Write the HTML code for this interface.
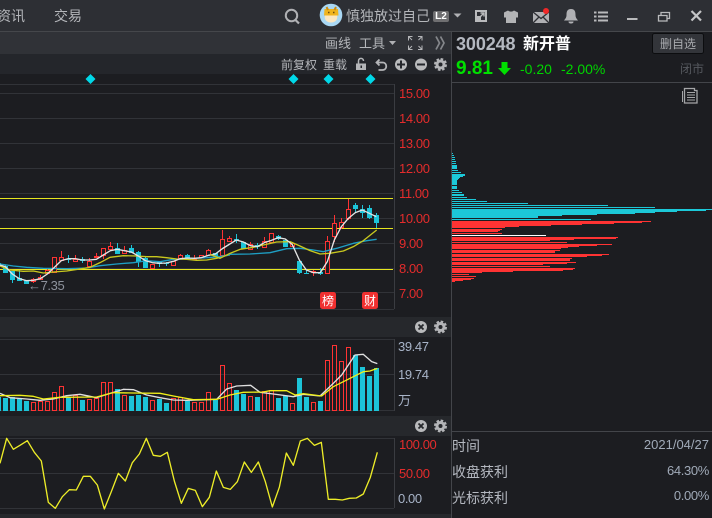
<!DOCTYPE html>
<html><head><meta charset="utf-8"><style>
*{margin:0;padding:0;box-sizing:border-box}
html,body{width:712px;height:518px;overflow:hidden;background:#1c1d21}
body{position:relative;font-family:"Liberation Sans","Noto Sans CJK SC",sans-serif}
.a{position:absolute}
.t{position:absolute;white-space:nowrap;line-height:16px}
.n{letter-spacing:-.4px}
svg{position:absolute;left:0;top:0}
</style></head><body>
<div class="a" style="left:0;top:0;width:712px;height:31px;background:#2d2f34"></div>
<div class="a" style="left:0;top:31px;width:712px;height:1px;background:#45474b"></div>
<div class="a" style="left:0;top:32px;width:451px;height:22px;background:#303237"></div>
<div class="a" style="left:0;top:54px;width:451px;height:20px;background:#24262b"></div>
<div class="a" style="left:0;top:317px;width:451px;height:20px;background:#26282c"></div>
<div class="a" style="left:0;top:416px;width:451px;height:20px;background:#26282c"></div>
<div class="a" style="left:0;top:514px;width:451px;height:4px;background:#26282c"></div>

<svg width="712" height="518" viewBox="0 0 712 518">
<path d="M451.5 32V518M452 82.500H712M452 431.500H712" stroke="#43454a" fill="none"/>
<path d="M0 84.500H394M0 93.500H394M0 118.500H394M0 143.500H394M0 168.500H394M0 193.500H394M0 218.500H394M0 243.500H394M0 268.500H394M0 292.500H394M0 309.500H394M0 339.500H394M0 374.500H394M0 410.500H394M0 438.500H394M0 473.500H394M0 508.500H394" stroke="#313338" fill="none"/>
<path d="M394.500 84V309M394.500 339V411M394.500 438V508" stroke="#3a3c41" fill="none"/>
<path d="M0 198.500H393" stroke="#e6e61e" fill="none"/>
<path d="M0 228.500H393" stroke="#e6e61e" fill="none"/>
<rect x="0" y="269" width="393" height="1" fill="#e6e61e"/>
<path fill="#00d8e8" d="M90.500 74l5 5-5 5-5-5zM293.500 74l5 5-5 5-5-5zM328.500 74l5 5-5 5-5-5zM370.500 74l5 5-5 5-5-5z"/>

<!-- candle wicks and bodies -->
<path stroke="#1cc4d8" fill="none" d="M5.500 265V267M12.500 280V283M19.500 270V278M68.500 255V263M82.500 257V263M117.500 243V248M131.500 245V248M138.500 251V252M138.500 262V267M145.500 257V258M159.500 261V267M166.500 262V266M187.500 254V255M236.500 234V243M257.500 243V249M278.500 235V240M285.500 239V240M299.500 260V274M306.500 269V274M320.500 268V275M355.500 203V213M362.500 205V218M369.500 205V219M376.500 213V228"/>
<path fill="#1cc4d8" d="M-4 263h5v3h-5zM3 266h5v7H3zM10 271h5v9h-5zM17 278h5v3h-5zM24 280h5v4h-5zM66 259h5v1h-5zM80 259h5v2h-5zM115 248h5v6h-5zM129 248h5v5h-5zM136 252h5v10h-5zM143 258h5v10h-5zM157 262h5v2h-5zM164 263h5v1h-5zM185 255h5v4h-5zM213 253h5v3h-5zM234 239h5v2h-5zM241 242h5v7h-5zM255 245h5v2h-5zM276 236h5v3h-5zM283 240h5v7h-5zM297 261h5v12h-5zM304 273h5v1h-5zM318 272h5v2h-5zM353 205h5v4h-5zM360 209h5v4h-5zM367 208h5v10h-5zM374 215h5v8h-5z"/>
<path stroke="#ff3333" fill="none" d="M33.500 278V283M40.500 275V280M47.500 268V274M61.500 251V257M75.500 255V259M89.500 258V261M96.500 253V258M103.500 255V259M110.500 242V251M124.500 246V250M152.500 268V269M180.500 254V255M194.500 255V258M208.500 249V250M222.500 230V239M229.500 236V242M250.500 242V250M264.500 237V241M292.500 242V247M313.500 270V276M327.500 236V241M334.500 215V242M341.500 218V229M348.500 199V220"/>
<path stroke="#ff3333" fill="#1c1d21" d="M31.500 279.500h4v2h-4zM38.500 277.500h4v2h-4zM45.500 270.500h4v3h-4zM52.500 257.500h4v15h-4zM59.500 257.500h4v3h-4zM73.500 259.500h4v2h-4zM87.500 261.500h4v5h-4zM94.500 256.500h4v1h-4zM101.500 248.500h4v7h-4zM108.500 246.500h4v3h-4zM122.500 250.500h4v3h-4zM150.500 264.500h4v4h-4zM171.500 261.500h4v4h-4zM178.500 255.500h4v3h-4zM192.500 258.500h4v1h-4zM199.500 255.500h4v2h-4zM206.500 250.500h4v5h-4zM220.500 239.500h4v16h-4zM227.500 238.500h4v3h-4zM248.500 244.500h4v5h-4zM262.500 241.500h4v6h-4zM269.500 233.500h4v9h-4zM290.500 243.500h4v3h-4zM311.500 271.500h4v1h-4zM325.500 241.500h4v32h-4zM332.500 223.500h4v13h-4zM339.500 222.500h4v5h-4zM346.500 209.500h4v9h-4z"/>

<!-- MA lines on price chart -->
<g transform="translate(0,190) scale(.33333)" fill="none" stroke-linejoin="round" stroke-width="4">
<path stroke="#1e9fc4" d="M0 222L40 228 80 232 130 235 200 236 260 234 300 227 350 222 400 218 440 212 480 215 520 208 560 206 620 203 660 200 690 195"/>
<path stroke="#c9c91e" d="M0 228L30 240 70 244 100 243 130 249 160 246 200 243 240 237 270 232 300 218 330 202 370 197 410 198 440 200 470 200 500 203 530 207 560 208 590 211 620 210 650 205 690 193"/>
<path stroke="#e4e4e4" d="M0 225L16 230 37 252 58 266 79 272 100 271 121 266 142 252 163 232 184 212 205 206 226 206 247 210 268 210 289 208 310 195 331 182 352 178 373 182 394 186 415 198 436 212 457 218 478 220 499 219 520 214 541 206 562 204 583 205 604 203 625 196 646 192 667 176 688 163"/>
</g>
<g transform="translate(220,190) scale(.33333)" fill="none" stroke-linejoin="round" stroke-width="4">
<path stroke="#1e9fc4" d="M-30 195L0 200 30 193 90 192 150 188 200 176 240 175 280 180 310 185 350 175 400 160 440 152 470 148"/>
<path stroke="#c9c91e" d="M-30 193L0 205 30 190 60 178 100 172 130 165 170 156 210 155 240 168 270 182 300 192 330 190 370 183 400 170 430 152 470 120"/>
<path stroke="#e4e4e4" d="M7 176L28 163 49 150 70 156 91 167 112 170 133 158 154 151 175 143 196 147 217 164 238 210 259 240 280 248 301 248 322 215 343 150 364 110 385 85 406 68 427 60 448 70 469 80"/>
</g>

<!-- volume -->
<path fill="#1cc4d8" d="M-4 397h5v14h-5zM3 398h5v13H3zM10 397h5v14h-5zM17 399h5v12h-5zM24 401h5v10h-5zM66 397h5v14h-5zM80 400h5v11h-5zM115 389h5v22h-5zM129 396h5v15h-5zM136 395h5v16h-5zM143 397h5v14h-5zM157 399h5v12h-5zM164 403h5v8h-5zM185 401h5v10h-5zM213 400h5v11h-5zM234 390h5v21h-5zM241 394h5v17h-5zM255 397h5v14h-5zM276 398h5v13h-5zM283 396h5v15h-5zM297 378h5v33h-5zM304 397h5v14h-5zM318 401h5v10h-5zM353 355h5v56h-5zM360 367h5v44h-5zM367 376h5v35h-5zM374 368h5v43h-5z"/>
<path stroke="#ff3333" fill="none" d="M31.500 402.500h4v8h-4zM38.500 401.500h4v9h-4zM45.500 401.500h4v9h-4zM52.500 392.500h4v18h-4zM59.500 386.500h4v24h-4zM73.500 395.500h4v15h-4zM87.500 399.500h4v11h-4zM94.500 398.500h4v12h-4zM101.500 382.500h4v28h-4zM108.500 382.500h4v28h-4zM122.500 395.500h4v15h-4zM150.500 400.500h4v10h-4zM171.500 398.500h4v12h-4zM178.500 397.500h4v13h-4zM192.500 402.500h4v8h-4zM199.500 402.500h4v8h-4zM206.500 392.500h4v18h-4zM220.500 365.500h4v45h-4zM227.500 383.500h4v27h-4zM248.500 396.500h4v14h-4zM262.500 391.500h4v19h-4zM269.500 390.500h4v20h-4zM290.500 403.500h4v7h-4zM311.500 402.500h4v8h-4zM325.500 360.500h4v50h-4zM332.500 345.500h4v65h-4zM339.500 361.500h4v49h-4zM346.500 347.500h4v63h-4z"/>
<g transform="translate(0,315) scale(.33333)" fill="none" stroke-linejoin="round" stroke-width="4">
<path stroke="#e0e0e0" d="M0 235L30 248 80 252 120 256 160 252 200 242 240 238 290 248 330 235 370 223 400 224 440 240 480 248 520 255 560 256 600 255 650 253 680 222 710 213 752 211 780 232 820 237 880 245 910 238 960 243 1000 205 1025 180 1065 120 1090 118 1115 140 1132 146"/>
<path stroke="#f0f01a" d="M0 242L60 241 100 244 130 252 180 247 290 246 340 233 400 234 480 235 520 243 580 254 650 253 690 240 730 232 790 231 810 227 860 227 885 240 910 236 965 243 1000 215 1030 200 1090 170 1110 168 1132 160"/>
<!-- stochastic -->
<path stroke="#eded28" d="M0 445L20 370 40 403 60 391 82 377 103 412 124 438 145 562 166 580 187 545 208 524 229 525 250 484 271 484 292 510 313 582 334 530 355 475 376 498 397 443 418 417 439 370 460 421 481 424 502 412 523 498 544 565 565 520 586 526 607 575 628 547 649 468 670 517 691 523 712 500 733 441 754 472 775 441 796 500 817 576 838 517 859 414 880 451 901 378 922 370 943 391 964 382 985 553 1006 553 1027 555 1048 550 1069 549 1090 537 1111 487 1132 412"/>
</g>

<!-- volume profile -->
<g transform="translate(445,145) scale(.33333)">
<path fill="#1cc8d8" d="M21 24H24V27H21ZM21 30H27V33H21ZM21 36H30V39H21ZM21 42H30V45H21ZM21 48H33V51H21ZM21 54H33V57H21ZM21 60H36V72H21ZM21 75H39V78H21ZM21 81H48V84H21ZM21 87H60V93H21ZM21 93H54V96H21ZM21 96H45V99H21ZM21 99H42V102H21ZM21 102H39V105H21ZM21 105H36V120H21ZM21 123H36V132H21ZM21 135H42V138H21ZM21 141H51V144H21ZM21 147H57V153H21ZM21 156H66V159H21ZM21 162H93V165H21ZM21 168H126V171H21ZM21 174H249V177H21ZM21 180H489V183H21ZM21 186H630V189H21ZM21 192H801V195H21ZM21 195H783V198H21ZM21 198H696V201H21ZM21 201H630V204H21ZM21 204H570V207H21ZM21 207H456V210H21ZM21 210H351V213H21ZM21 213H279V219H21ZM21 222H438V225H21Z"/>
<path fill="#ff3333" d="M21 228H618V231H21ZM21 231H591V234H21ZM21 234H507V237H21ZM21 237H411V240H21ZM21 240H318V243H21ZM21 243H222V246H21ZM21 246H180V249H21ZM21 252H171V255H21ZM21 255H165V258H21ZM21 258H159V261H21ZM21 264H171V267H21ZM21 276H519V279H21ZM21 279H513V282H21ZM21 282H387V285H21ZM21 285H315V288H21ZM21 291H366V294H21ZM21 297H501V300H21ZM21 300H456V303H21ZM21 303H402V306H21ZM21 306H369V309H21ZM21 309H348V312H21ZM21 315H345V318H21ZM21 318H330V324H21ZM21 327H492V330H21ZM21 330H471V333H21ZM21 333H426V336H21ZM21 339H381V342H21ZM21 342H375V348H21ZM21 351H393V354H21ZM21 354H366V357H21ZM21 357H294V360H21ZM21 363H315V366H21ZM21 369H390V372H21ZM21 372H384V375H21ZM21 375H354V378H21ZM21 378H204V381H21ZM21 381H111V384H21ZM21 387H72V390H21ZM21 393H93V396H21ZM21 399H87V402H21ZM21 402H78V405H21ZM21 405H54V408H21ZM21 408H30V411H21Z"/>
<path fill="#fff" d="M21 270H303V273H21Z"/>
</g>

<!-- header icons -->
<circle cx="291.500" cy="15.500" r="5.700" fill="none" stroke="#b0b1b4" stroke-width="2"/><path d="M295.500 20l3.500 3.500" stroke="#b0b1b4" stroke-width="2.200"/>
<circle cx="331" cy="15" r="11.300" fill="#a9d8f4"/>
<path d="M325 15c-1 4 1 7.500 6 7.500s7-3.500 6-7.500z" fill="#fbe6c0"/>
<path d="M324.500 9h13.500l.5 6.500h-14.500z" fill="#f0b41e"/>
<path d="M326.500 7l1.500 3M336 7l-1.500 3" stroke="#c98c14" stroke-width="2"/>
<path d="M328 12.500h1.500M333 12.500h1.500" stroke="#6b4a10" stroke-width="1.500"/>
<rect x="433" y="11" width="16" height="11" rx="2" fill="#6f6f71"/>
<path d="M453.500 13.500h8l-4 4z" fill="#b0b1b4"/>
<path d="M476 16v-5h10v10h-5" fill="none" stroke="#b9babc" stroke-width="2"/><path d="M475 16h6v6h-6z" fill="#b9babc"/><path d="M479 18l5-5M480.500 13h3.500v3.500" fill="none" stroke="#b9babc" stroke-width="1.400"/>
<path d="M508 10.500c2 1.500 4 1.500 6 0l4 2v5h-2v5.500h-10v-5.500h-2v-5z" fill="#b3b4b6"/>
<path d="M533 12h16v11h-16z" fill="#b0b1b4"/><path d="M533 12l8 6.500 8-6.500M533 23l6-6M549 23l-6-6" fill="none" stroke="#2d2f34" stroke-width="1.300"/>
<circle cx="546" cy="11" r="3" fill="#f02828"/>
<path d="M571 9c4 0 4.500 3 4.500 6 0 2.500 1 3.500 2.500 5.500h-14c1.500-2 2.500-3 2.500-5.500 0-3 .5-6 4.500-6z" fill="#b0b1b4"/><path d="M568.500 21.500h5c0 1.500-1 2-2.500 2s-2.500-.5-2.500-2z" fill="#b0b1b4"/>
<path d="M594 12.500h2.500M598 12.500h10M594 16.500h2.500M598 16.500h10M594 20.500h2.500M598 20.500h10" stroke="#b9babc" stroke-width="2"/>
<path d="M627 19h10.500" stroke="#b9babc" stroke-width="2"/>
<path d="M658.500 15.500h8.500v5.500h-8.500zM661 15v-2.500h8.500v6h-2.500" fill="none" stroke="#b9babc" stroke-width="1.300"/>
<path d="M691.500 11l9.500 9.500M701 11l-9.500 9.500" stroke="#c4c5c7" stroke-width="2.200"/>

<!-- toolbar icons -->
<path d="M389 41h7l-3.500 4z" fill="#b0b1b4"/>
<path d="M408.500 40.500v-4h4M422 40.500v-4h-4M408.500 45.500v4h4M422 45.500v4h-4M409 37l3 3M421.500 37l-3 3M409 49l3-3M421.500 49l-3-3" fill="none" stroke="#b4b5b8"/>
<path d="M436 36.500l3.500 6.500-3.500 6.500M440.500 36.500l3.500 6.500-3.500 6.500" fill="none" stroke="#85878b" stroke-width="1.700"/>
<path d="M356 63.500h10v6.500h-10z" fill="#b4b5b8"/><path d="M358.500 63.500v-2.500c0-3.500 5-3.500 5 0" fill="none" stroke="#b4b5b8" stroke-width="1.500"/><rect x="360.500" y="65.500" width="1.500" height="2.500" fill="#24262b"/>
<path d="M379.500 59.500l-3 3 3 3M376.500 62.500h6c5 0 5 7.500 0 7.500h-4" fill="none" stroke="#b4b5b8" stroke-width="1.800"/>
<circle cx="401" cy="64.500" r="6" fill="#b9babc"/><path d="M397 64.500h8M401 60.500v8" stroke="#24262b" stroke-width="2"/>
<circle cx="421" cy="64.500" r="6" fill="#b9babc"/><path d="M417 64.500h8" stroke="#24262b" stroke-width="2"/>
<circle cx="440.500" cy="64.500" r="3.500" fill="none" stroke="#b4b5b8" stroke-width="3"/><circle cx="440.500" cy="64.500" r="5.300" fill="none" stroke="#b4b5b8" stroke-width="2.400" stroke-dasharray="2.500 1.660"/>

<circle cx="421" cy="327" r="6" fill="#b9babc"/><path d="M418.500 324.500l5 5M423.500 324.500l-5 5" stroke="#26282c" stroke-width="1.800"/>
<circle cx="440.500" cy="327" r="3.500" fill="none" stroke="#b4b5b8" stroke-width="3"/><circle cx="440.500" cy="327" r="5.300" fill="none" stroke="#b4b5b8" stroke-width="2.400" stroke-dasharray="2.500 1.660"/>
<circle cx="421" cy="426" r="6" fill="#b9babc"/><path d="M418.500 423.500l5 5M423.500 423.500l-5 5" stroke="#26282c" stroke-width="1.800"/>
<circle cx="440.500" cy="426" r="3.500" fill="none" stroke="#b4b5b8" stroke-width="3"/><circle cx="440.500" cy="426" r="5.300" fill="none" stroke="#b4b5b8" stroke-width="2.400" stroke-dasharray="2.500 1.660"/>

<!-- quote -->
<path d="M501.500 62h6v6h3.500l-6.500 7-6.500-7h3.500z" fill="#00e000"/>
<path d="M684.500 88.500h10v2h2.500v12.500h-12.500z" fill="none" stroke="#a5a6a8" stroke-width="1.300"/><path d="M687 92.500h8M687 95h8M687 97.500h8M687 100h8" stroke="#a5a6a8"/><path d="M682.500 91v11" stroke="#a5a6a8"/>
<rect x="652.500" y="33.500" width="51" height="20" rx="2" fill="#33353a" stroke="#0c0d0f"/>
<rect x="320" y="292" width="16" height="17" rx="2.500" fill="#f03030"/>
<rect x="362" y="292" width="16" height="17" rx="2.500" fill="#f03030"/>
</svg>

<div class="t" style="left:-3px;top:8px;font-size:14px;color:#b4b6ba">资讯</div>
<div class="t" style="left:54px;top:8px;font-size:14px;color:#b4b6ba">交易</div>
<div class="t" style="left:346px;top:8px;font-size:14px;color:#b4b6ba">慎独放过自己</div>
<div class="t" style="left:433px;top:9px;width:16px;text-align:center;font-size:10px;font-weight:bold;color:#fff">L2</div>
<div class="t" style="left:325px;top:36px;font-size:13px;color:#b4b6ba">画线</div>
<div class="t" style="left:359px;top:36px;font-size:13px;color:#b4b6ba">工具</div>
<div class="t" style="left:281px;top:57px;font-size:12px;color:#b4b6ba">前复权</div>
<div class="t" style="left:323px;top:57px;font-size:12px;color:#b4b6ba">重载</div>

<div class="t n" style="left:399px;top:86px;font-size:13px;color:#e42c2c">15.00</div>
<div class="t n" style="left:399px;top:111px;font-size:13px;color:#e42c2c">14.00</div>
<div class="t n" style="left:399px;top:136px;font-size:13px;color:#e42c2c">13.00</div>
<div class="t n" style="left:399px;top:161px;font-size:13px;color:#e42c2c">12.00</div>
<div class="t n" style="left:399px;top:186px;font-size:13px;color:#e42c2c">11.00</div>
<div class="t n" style="left:399px;top:211px;font-size:13px;color:#e42c2c">10.00</div>
<div class="t n" style="left:399px;top:236px;font-size:13px;color:#e42c2c">9.00</div>
<div class="t n" style="left:399px;top:261px;font-size:13px;color:#e42c2c">8.00</div>
<div class="t n" style="left:399px;top:286px;font-size:13px;color:#e42c2c">7.00</div>
<div class="t n" style="left:398px;top:339px;font-size:13px;color:#a8b4c8">39.47</div>
<div class="t n" style="left:398px;top:367px;font-size:13px;color:#a8b4c8">19.74</div>
<div class="t" style="left:398px;top:393px;font-size:13px;color:#a8b4c8">万</div>
<div class="t n" style="left:399px;top:437px;font-size:13px;color:#e42c2c">100.00</div>
<div class="t n" style="left:399px;top:466px;font-size:13px;color:#e42c2c">50.00</div>
<div class="t n" style="left:398px;top:491px;font-size:13px;color:#a8b4c8">0.00</div>

<div class="t" style="left:28px;top:278px;font-size:13px;letter-spacing:-.4px;color:#8d929c">←7.35</div>
<div class="t" style="left:322px;top:293px;font-size:12px;color:#fff">榜</div>
<div class="t" style="left:364px;top:293px;font-size:12px;color:#fff">财</div>

<div class="t" style="left:456px;top:36px;font-size:18px;font-weight:bold;letter-spacing:-.1px;color:#b4b8c0">300248</div>
<div class="t" style="left:523px;top:37px;font-size:16px;font-weight:bold;color:#fff">新开普</div>
<div class="t" style="left:660px;top:36px;font-size:12px;color:#a8aaae">删自选</div>
<div class="t" style="left:456px;top:61px;font-size:19px;font-weight:bold;color:#00e000">9.81</div>
<div class="t" style="left:520px;top:61px;font-size:14px;color:#00d400">-0.20</div>
<div class="t" style="left:561px;top:61px;font-size:14px;color:#00d400">-2.00%</div>
<div class="t" style="left:680px;top:61px;font-size:12px;color:#55585e">闭市</div>

<div class="t" style="left:452px;top:438px;font-size:14px;color:#b4b8c0">时间</div>
<div class="t" style="left:452px;top:464px;font-size:14px;color:#b4b8c0">收盘获利</div>
<div class="t" style="left:452px;top:490px;font-size:14px;color:#b4b8c0">光标获利</div>
<div class="t" style="right:3px;top:437px;font-size:13px;color:#a0aab8">2021/04/27</div>
<div class="t" style="right:3px;top:463px;font-size:13px;letter-spacing:-.35px;color:#a0aab8">64.30%</div>
<div class="t" style="right:3px;top:488px;font-size:13px;letter-spacing:-.35px;color:#a0aab8">0.00%</div>
</body></html>
